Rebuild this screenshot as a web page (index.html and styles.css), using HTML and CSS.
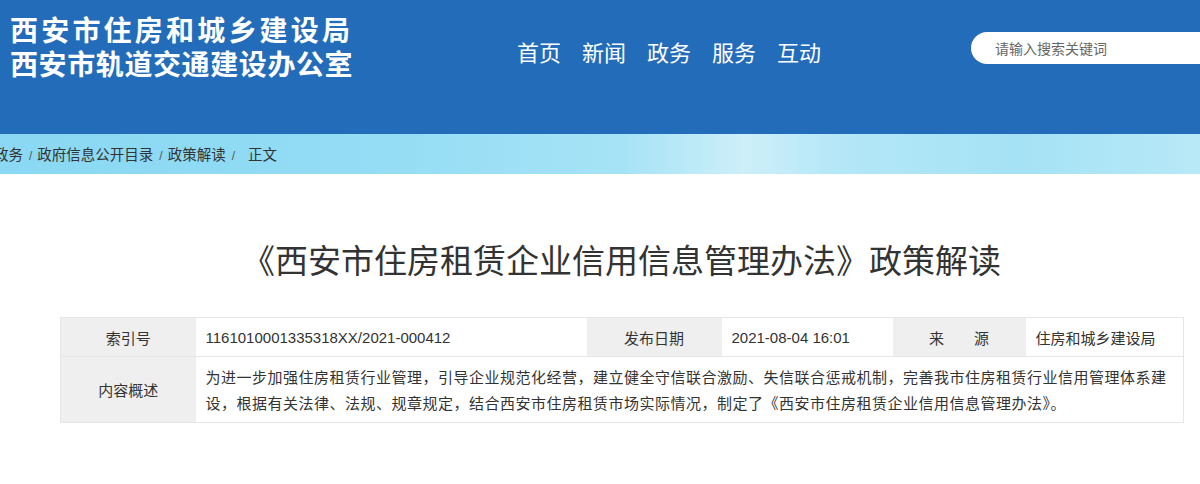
FILE: index.html
```html
<!DOCTYPE html>
<html lang="zh-CN">
<head>
  <meta charset="UTF-8">
  <title>《西安市住房租赁企业信用信息管理办法》政策解读</title>
  <link rel="stylesheet" href="styles.css">
</head>
<body>
  <header class="top">
    <div class="logo">
      <div class="logo-line first">西安市住房和城乡建设局</div>
      <div class="logo-line second">西安市轨道交通建设办公室</div>
    </div>
    <nav class="nav">
      <a href="#">首页</a>
      <a href="#">新闻</a>
      <a href="#">政务</a>
      <a href="#">服务</a>
      <a href="#">互动</a>
    </nav>
    <div class="search">
      <input type="text" placeholder="请输入搜索关键词">
    </div>
  </header>

  <div class="crumbs">
    <div class="crumbs-inner">
      <a href="#">政务</a><span class="sep">/</span><a href="#">政府信息公开目录</a><span class="sep">/</span><a href="#">政策解读</a><span class="sep wide">/</span><span>正文</span>
    </div>
  </div>

  <div class="container">
    <h1 class="title">《西安市住房租赁企业信用信息管理办法》政策解读</h1>
    <table class="info">
      <colgroup>
        <col class="c1"><col class="c2"><col class="c3"><col class="c4"><col class="c5"><col class="c6">
      </colgroup>
      <tr class="row-meta">
        <th>索引号</th>
        <td class="num">1161010001335318XX/2021-000412</td>
        <th>发布日期</th>
        <td class="num">2021-08-04 16:01</td>
        <th>来　　源</th>
        <td>住房和城乡建设局</td>
      </tr>
      <tr class="row-desc">
        <th>内容概述</th>
        <td colspan="5">为进一步加强住房租赁行业管理，引导企业规范化经营，建立健全守信联合激励、失信联合惩戒机制，完善我市住房租赁行业信用管理体系建设，根据有关法律、法规、规章规定，结合西安市住房租赁市场实际情况，制定了《西安市住房租赁企业信用信息管理办法》。</td>
      </tr>
    </table>
  </div>
</body>
</html>
```

FILE: styles.css
```css
* {
  box-sizing: border-box;
}
body {
  margin: 0;
  padding: 0;
  background: #fff;
  color: #333;
  font-family: "Noto Sans CJK SC", "Noto Sans", sans-serif;
}
a {
  color: inherit;
  text-decoration: none;
}
.top {
  display: flex;
  align-items: flex-start;
  height: 134px;
  background: #236cb9;
  color: #fff;
}
.logo {
  width: 517px;
  padding: 12px 0 0 10px;
  flex-shrink: 0;
}
.logo-line {
  font-size: 28px;
  font-weight: bold;
  line-height: 34px;
  white-space: nowrap;
}
.logo-line.first {
  letter-spacing: 3.2px;
}
.logo-line.second {
  letter-spacing: 0.6px;
}
.nav {
  display: flex;
  gap: 21px;
  margin-top: 35px;
}
.nav a {
  font-size: 22px;
  line-height: 32px;
}
.search {
  margin: 32px 0 0 auto;
  width: 229px;
  height: 32px;
  background: #fff;
  border-radius: 16px 0 0 16px;
}
.search input {
  width: 100%;
  height: 32px;
  border: none;
  outline: none;
  background: transparent;
  padding: 0 0 0 24px;
  font-family: "Noto Sans CJK SC", sans-serif;
  font-size: 14px;
  color: #333;
}
.search input::placeholder {
  color: #666;
}
.crumbs {
  height: 40px;
  background: linear-gradient(90deg, #8ad8f3 0%, #93dcf4 30%, #a6e3f6 52%, #cdeff9 62%, #b4e7f7 70%, #a5e2f5 85%, #b8e9f7 100%);
  overflow: hidden;
}
.crumbs-inner {
  margin-left: -6px;
  font-size: 14.5px;
  line-height: 40px;
  color: #333;
  white-space: nowrap;
}
.sep {
  display: inline-block;
  margin: 0 5px 0 6px;
  font-family: "Liberation Sans", sans-serif;
  font-size: 12px;
  color: #555;
}
.sep.wide {
  margin-right: 13px;
}
.container {
  width: 1123px;
  margin-left: 60px;
}
.title {
  margin: 65px 0 38px;
  text-align: center;
  font-size: 33px;
  font-weight: normal;
  line-height: 40px;
  color: #333;
}
.info {
  width: 1123px;
  border-collapse: collapse;
  table-layout: fixed;
  font-size: 15px;
  border: 1px solid #e6e6e6;
}
.c1 { width: 135px; }
.c2 { width: 391px; }
.c3 { width: 135px; }
.c4 { width: 171px; }
.c5 { width: 133px; }
.c6 { width: 158px; }
.info th {
  background: #efefef;
  font-weight: normal;
  text-align: center;
  color: #333;
}
.info td {
  padding: 0 10px;
  color: #333;
}
.info .num {
  font-family: "Liberation Sans", "Noto Sans CJK SC", sans-serif;
}
.row-meta th,
.row-meta td {
  height: 39px;
  border-bottom: 1px solid #e6e6e6;
}
.row-desc th,
.row-desc td {
  height: 66px;
  line-height: 26px;
}
.row-desc td {
  letter-spacing: 0.5px;
}
```
